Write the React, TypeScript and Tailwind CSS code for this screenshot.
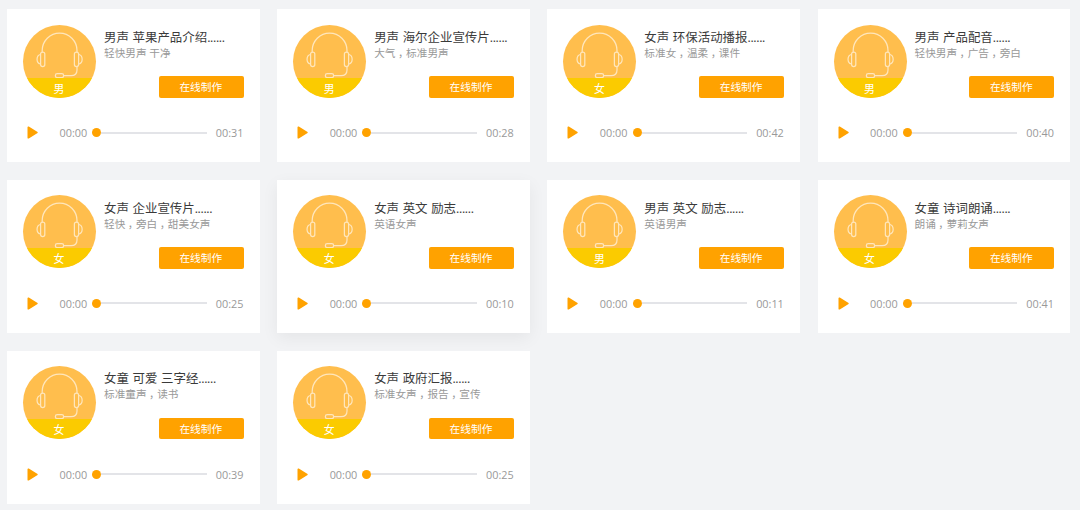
import React from 'react';

interface Voice {
  title: string;
  tags: string[];
  gender: '男' | '女';
  duration: string;
  active?: boolean;
}

const voices: Voice[] = [
  { title: '男声 苹果产品介绍', tags: ['轻快男声 干净'], gender: '男', duration: '00:31' },
  { title: '男声 海尔企业宣传片', tags: ['大气', '标准男声'], gender: '男', duration: '00:28' },
  { title: '女声 环保活动播报', tags: ['标准女', '温柔', '课件'], gender: '女', duration: '00:42' },
  { title: '男声 产品配音', tags: ['轻快男声', '广告', '旁白'], gender: '男', duration: '00:40' },
  { title: '女声 企业宣传片', tags: ['轻快', '旁白', '甜美女声'], gender: '女', duration: '00:25' },
  { title: '女声 英文 励志', tags: ['英语女声'], gender: '女', duration: '00:10', active: true },
  { title: '男声 英文 励志', tags: ['英语男声'], gender: '男', duration: '00:11' },
  { title: '女童 诗词朗诵', tags: ['朗诵', '萝莉女声'], gender: '女', duration: '00:41' },
  { title: '女童 可爱 三字经', tags: ['标准童声', '读书'], gender: '女', duration: '00:39' },
  { title: '女声 政府汇报', tags: ['标准女声', '报告', '宣传'], gender: '女', duration: '00:25' },
];

const Headset = () => (
  <svg viewBox="0 0 73 53" className="block h-[53px] w-[73px]" fill="none" stroke="#ffe6bb" strokeWidth="1.25" strokeLinecap="round">
    {/* Headband */}
    <path d="M19.200 27v-1.500a17.400 17.400 0 0 1 34.800 0V27" />
    {/* Ear cups */}
    <rect x="17.600" y="27" width="4.200" height="14.600" rx="2.100" />
    <rect x="51.400" y="27" width="4.200" height="14.600" rx="2.100" />
    <path d="M17.200 29.500c-4.200 1.200-4.200 8.300 0 9.500M56 29.500c4.200 1.200 4.200 8.300 0 9.500" />
    {/* Microphone */}
    <path d="M54 41.600v3.400c0 3.800-2 5.700-6 5.700h-7.300" />
    <rect x="32.400" y="48.700" width="8.200" height="3.900" rx="1.800" />
  </svg>
);

const Avatar: React.FC<{ gender: string }> = ({ gender }) => (
  <div className="h-[73px] w-[73px] shrink-0 overflow-hidden rounded-full bg-[#ffbe4d]">
    <Headset />
    <div className="h-5 bg-[#fbcb00] pr-px text-center text-[10.9px] leading-[21px] text-white">{gender}</div>
  </div>
);

const VoiceCard: React.FC<{ voice: Voice }> = ({ voice }) => (
  <div
    className={`h-[153.2px] bg-white px-4 pt-[15.600px] ${
      voice.active ? 'shadow-[0_5px_16px_rgba(0,0,0,0.06)]' : ''
    }`}
  >
    <div className="flex gap-2">
      <Avatar gender={voice.gender} />
      <div className="flex min-w-0 flex-1 flex-col whitespace-nowrap">
        <h3 className="mt-[5.200px] text-[12.45px] leading-4 text-[#3a3a3a] [word-spacing:0.4px]">
          {voice.title}
          <span className="tracking-[-0.35px]">......</span>
        </h3>
        <p className="text-[10.65px] leading-[15px] text-[#999]">
          {voice.tags.map((tag, i) => (
            <React.Fragment key={tag}>
              {i > 0 && <span className="pl-[2.500px] tracking-[-2.500px]">，</span>}
              {tag}
            </React.Fragment>
          ))}
        </p>
        <button className="mt-[15.500px] h-[21.500px] w-[85.200px] self-end rounded-[2px] bg-[#ffa200] pr-px text-[10.7px] leading-[22px] text-white">
          在线制作
        </button>
      </div>
    </div>

    {/* Player */}
    <div className="mt-[26.900px] flex h-4 items-center text-[10.85px] text-[#999]">
      <svg viewBox="0 0 11 13" className="ml-1 h-[13px] w-[11px]" fill="#ffa200">
        <path d="M.5 1.300C.5.500 1.100.200 1.800.600l8.400 5.100c.700.400.700 1.100 0 1.500l-8.400 5.200c-.700.400-1.300.100-1.300-.700z" />
      </svg>
      <span className="ml-[21.500px] pt-px leading-4">00:00</span>
      <div className="ml-[5px] flex flex-1 items-center">
        <span className="h-[9px] w-[9px] rounded-full bg-[#ffa200]" />
        <span className="h-[2px] flex-1 bg-[#e3e4e8]" />
      </div>
      <span className="ml-[9.300px] mr-[0.400px] pt-px leading-4">{voice.duration}</span>
    </div>
  </div>
);

export default function App() {
  return (
    <div className="h-[510px] w-[1080px] overflow-hidden bg-[#f2f3f5] pl-[7px] pt-[9px] font-['Open_Sans','Noto_Sans_CJK_SC',sans-serif]">
      <div className="grid w-[1063.400px] grid-cols-4 gap-x-[17.300px] gap-y-[17.600px]">
        {voices.map((voice, i) => (
          <VoiceCard key={i} voice={voice} />
        ))}
      </div>
    </div>
  );
}
